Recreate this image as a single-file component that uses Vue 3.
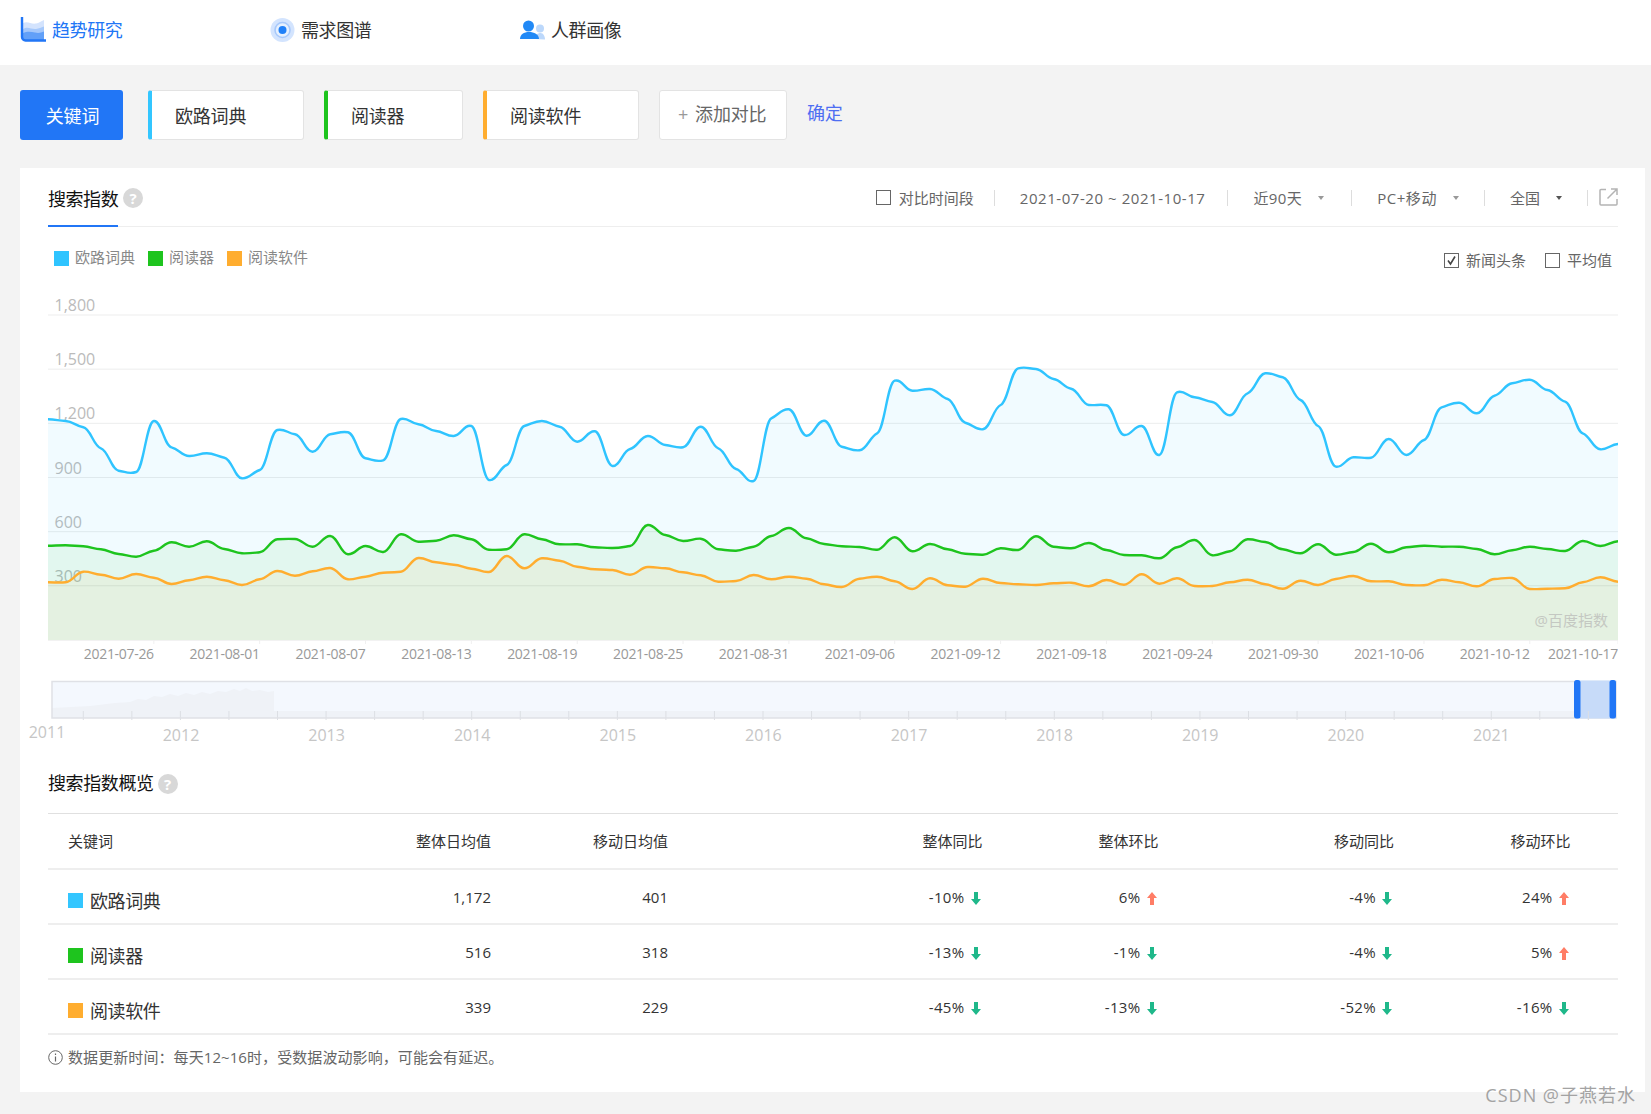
<script setup>
const seg = (base, arr) => arr.map((v) => base + v / 3)

const blueRaw = [
  ...seg(290, [388,393,412,475,542,546,393,472,498,490,503,565,540,420,433,485,433,427,505,511,387,403,423,438,408,570,525,408,393]),
  ...seg(340, [260,305,274,378,327,288,315,322,260,325,387,423,235,208,287,242,320,331,280,122,152,147,177,248,268,195,85,87,117,146,195]),
  ...seg(340, [196,285,258,345,157,172,186,226,160,100,112,180,258,380,352,353,297,345,300,202,188,220,167,130,119,150,185,280,328,312]),
]
const greenRaw = [
  ...seg(290, [767,766,769,778,792,800,782,757,770,754,777,790,787,748,747,770,738,793,768,786,733,755,752,736,748,779,778,733,748]),
  ...seg(340, [613,613,622,624,618,555,585,603,596,628,632,620,588,564,595,612,619,621,629,592,634,612,628,641,644,625,630,589,620,625,609]),
  ...seg(340, [630,645,646,655,622,600,646,634,598,606,628,640,613,644,636,611,637,622,617,620,620,627,643,631,620,627,633,603,618,604]),
]
const orangeRaw = [
  ...seg(290, [877,877,845,854,866,852,863,882,871,860,871,885,868,843,857,844,834,868,860,848,845,804,817,824,836,846,798,835,805]),
  ...seg(340, [662,680,688,690,704,681,685,697,706,725,723,705,718,710,716,733,741,716,710,724,747,715,736,740,716,729,733,735,730,728,739]),
  ...seg(340, [720,734,703,731,715,738,738,727,719,733,746,722,735,717,708,724,724,735,736,719,727,739,717,714,747,746,745,727,712,725]),
]

const X0 = 48
const STEP = 1570 / 89
const BOTTOM = 640
const DAMP = 0.3
const xAt = (i) => X0 + STEP * i

function smooth(ys) {
  const pts = ys.map((y, i) => [xAt(i), y])
  let d = `M${pts[0][0].toFixed(1)} ${pts[0][1].toFixed(1)}`
  for (let i = 0; i < pts.length - 1; i++) {
    const p0 = pts[Math.max(0, i - 1)]
    const p1 = pts[i]
    const p2 = pts[i + 1]
    const p3 = pts[Math.min(pts.length - 1, i + 2)]
    const c1x = p1[0] + STEP * 0.42
    const c1y = p1[1] + ((p2[1] - p0[1]) / 6) * DAMP
    const c2x = p2[0] - STEP * 0.42
    const c2y = p2[1] - ((p3[1] - p1[1]) / 6) * DAMP
    d += `C${c1x.toFixed(1)} ${c1y.toFixed(1)} ${c2x.toFixed(1)} ${c2y.toFixed(1)} ${p2[0].toFixed(1)} ${p2[1].toFixed(1)}`
  }
  return d
}

const series = [
  { name: '欧路词典', color: '#2fc4ff', area: 'rgba(51,198,255,.07)', ys: blueRaw },
  { name: '阅读器', color: '#1ec41e', area: 'rgba(30,196,30,.07)', ys: greenRaw },
  { name: '阅读软件', color: '#ffad2f', area: 'rgba(255,173,47,.075)', ys: orangeRaw },
].map((s) => {
  const line = smooth(s.ys)
  return { ...s, line, fill: `${line}L${xAt(89)} ${BOTTOM}L${X0} ${BOTTOM}Z` }
})

const grid = [
  { label: '1,800', y: 315 },
  { label: '1,500', y: 369.2 },
  { label: '1,200', y: 423.3 },
  { label: '900', y: 477.5 },
  { label: '600', y: 531.7 },
  { label: '300', y: 585.8 },
]

const dates = ['07-26','08-01','08-07','08-13','08-19','08-25','08-31','09-06','09-12','09-18','09-24','09-30','10-06','10-12']
const xLabels = [
  ...dates.map((d, k) => ({ text: `2021-${d}`, x: xAt(6 * (k + 1)) })),
  { text: '2021-10-17', x: xAt(89) },
]

const brushTicks = Array.from({ length: 32 }, (_, k) => 83.3 + 48.55 * k)
const years = Array.from({ length: 10 }, (_, k) => ({ text: String(2012 + k), x: 181 + 145.6 * k }))

const chips = [
  { name: '欧路词典', color: '#33c6ff', width: 156 },
  { name: '阅读器', color: '#1ec41e', width: 139 },
  { name: '阅读软件', color: '#ffad2f', width: 156 },
]

const heads = ['关键词', '整体日均值', '移动日均值', '整体同比', '整体环比', '移动同比', '移动环比']
const rows = [
  { name: '欧路词典', color: '#33c6ff', a: '1,172', b: '401', v: [['-10%', 0], ['6%', 1], ['-4%', 0], ['24%', 1]] },
  { name: '阅读器', color: '#1ec41e', a: '516', b: '318', v: [['-13%', 0], ['-1%', 0], ['-4%', 0], ['5%', 1]] },
  { name: '阅读软件', color: '#ffad2f', a: '339', b: '229', v: [['-45%', 0], ['-13%', 0], ['-52%', 0], ['-16%', 0]] },
]
</script>

<template>
  <div class="page">
    <nav class="nav">
      <div class="nav-item active">
        <svg class="nav-icon" width="26" height="26" viewBox="0 0 26 26">
          <path d="M3 6c5-2.500 8 1.500 13 .5 3-.6 5-2 8-3.500V20H3Z" fill="#d3e3fd" />
          <path d="M3 12c5-3 8 .5 13 0 3-.3 5-1.500 8-2.500V21H3Z" fill="#a5c8fb" />
          <path d="M3 16c4-2 8-1.500 12-.5 4 1 6 0 9-1V23H3Z" fill="#62a0f8" />
          <path d="M2 0V20a3.500 3.500 0 0 0 3.500 3.500H26" fill="none" stroke="#2176f6" stroke-width="2.400" />
        </svg>
        <span>趋势研究</span>
      </div>
      <div class="nav-item">
        <svg class="nav-icon" width="25" height="26" viewBox="0 0 25 26">
          <circle cx="12.500" cy="13" r="12" fill="#d3e4fe" />
          <circle cx="12.500" cy="13" r="7.500" fill="#e6f0fe" stroke="#a8c9fb" stroke-width="1.600" />
          <circle cx="12.500" cy="13" r="4" fill="#2080f8" />
        </svg>
        <span>需求图谱</span>
      </div>
      <div class="nav-item">
        <svg class="nav-icon" width="25" height="26" viewBox="0 0 25 26">
          <circle cx="20" cy="11.500" r="4" fill="#bcd8fb" />
          <path d="M15 22c0-4 2.500-6 5.500-6s4.500 3.500 4.500 6.500Z" fill="#bcd8fb" />
          <circle cx="8.500" cy="9" r="5.500" fill="#2189f6" />
          <path d="M0 22c0-4.500 4-7 9-7s10 2.500 10 7Z" fill="#2189f6" />
        </svg>
        <span>人群画像</span>
      </div>
    </nav>

    <section class="actions">
      <button class="key-btn">关键词</button>
      <div
        v-for="c in chips"
        :key="c.name"
        class="chip"
        :style="{ width: c.width + 'px', borderLeftColor: c.color }"
      >{{ c.name }}</div>
      <div class="add"><span class="plus">+</span>添加对比</div>
      <a class="confirm">确定</a>
    </section>

    <main class="card">
      <header class="head">
        <div class="tab">搜索指数</div>
        <span class="help">?</span>
        <div class="filters">
          <span class="box"></span>
          <span class="f f-compare">对比时间段</span>
          <i class="sep"></i>
          <span class="f f-date">2021-07-20 ~ 2021-10-17</span>
          <i class="sep"></i>
          <span class="f f-sel f-days">近90天<i class="tri"></i></span>
          <i class="sep"></i>
          <span class="f f-sel f-wide">PC+移动<i class="tri"></i></span>
          <i class="sep"></i>
          <span class="f f-sel">全国<i class="tri dark"></i></span>
          <i class="sep"></i>
          <svg class="share" width="19" height="18" viewBox="0 0 19 18" fill="none" stroke="#b4b4b4" stroke-width="1.500">
            <path d="M7 1.500H2a1 1 0 0 0-1 1V16a1 1 0 0 0 1 1h15a1 1 0 0 0 1-1V11" />
            <path d="M8.500 10.500 17.500 1.500M12 1H18V7" />
          </svg>
        </div>
      </header>

      <div class="options">
        <div class="legend">
          <span v-for="s in series" :key="s.name" class="legend-item">
            <i class="swatch" :style="{ background: s.color }"></i>{{ s.name }}
          </span>
        </div>
        <div class="checks">
          <span class="box on">
            <svg width="11" height="11" viewBox="0 0 11 11"><path d="M2 5.500 4.500 9 9 1.500" fill="none" stroke="#444" stroke-width="1.600" /></svg>
          </span>
          <span class="f check-text">新闻头条</span>
          <span class="box second"></span>
          <span class="f check-text">平均值</span>
        </div>
      </div>

      <svg class="chart" width="1570" height="386" viewBox="48 286 1570 386">
        <line v-for="g in grid" :key="g.y" x1="48" x2="1618" :y1="g.y" :y2="g.y" stroke="#f3f3f3" />
        <text v-for="g in grid" :key="g.label" x="54.500" :y="g.y - 4" class="y-label">{{ g.label }}</text>
        <path v-for="s in series" :key="s.name + 'a'" :d="s.fill" :fill="s.area" />
        <line v-for="g in grid" :key="g.y + 'o'" x1="48" x2="1618" :y1="g.y" :y2="g.y" stroke="rgba(120,130,130,.05)" />
        <path v-for="s in series" :key="s.name + 'l'" :d="s.line" fill="none" :stroke="s.color" stroke-width="2.400" stroke-linejoin="round" />
        <line x1="48" x2="1618" y1="640.500" y2="640.500" stroke="#f2f2f2" />
        <line v-for="l in xLabels" :key="l.text + 't'" :x1="l.x" :x2="l.x" y1="640" y2="644" stroke="#f0f0f0" />
        <text v-for="l in xLabels" :key="l.text" :x="l.x" y="659" text-anchor="end" class="x-label">{{ l.text }}</text>
        <text x="1608" y="625.500" text-anchor="end" class="mark">@百度指数</text>
      </svg>

      <svg class="brush" width="1600" height="78" viewBox="28 672 1600 78">
        <rect x="52" y="681.500" width="1564" height="36" fill="#f4f8fe" />
        <rect x="52" y="711" width="1564" height="7" fill="#eff2f7" />
        <path d="M52 708 90 706 115 703 130 702 138 699 146 700 154 696 162 697 170 694 178 696 186 693 194 695 202 692 210 694 218 691 226 692 234 689 240 691 246 688 252 691 260 690 268 692 274 691V711H52Z" fill="#eff2f7" />
        <line v-for="t in brushTicks" :key="t" :x1="t" :x2="t" y1="711" y2="720" stroke="#dcdfe4" />
        <rect x="52" y="681.500" width="1564" height="36.500" fill="none" stroke="#dfe1e6" stroke-width="1.500" />
        <rect x="1575" y="680.500" width="41" height="38" fill="#c7dbf9" />
        <line x1="1588.400" x2="1588.400" y1="711" y2="720" stroke="#dcdfe4" />
        <rect x="1574" y="680" width="6.500" height="38.500" rx="2.500" fill="#2176f6" />
        <rect x="1609.500" y="680" width="6.500" height="38.500" rx="2.500" fill="#2176f6" />
        <text x="47" y="738" text-anchor="middle" class="year">2011</text>
        <text v-for="y in years" :key="y.text" :x="y.x" y="741" text-anchor="middle" class="year">{{ y.text }}</text>
      </svg>

      <div class="overview">
        <span class="over-title">搜索指数概览</span>
        <span class="help">?</span>
      </div>

      <div class="table">
        <div class="row head-row">
          <div v-for="(h, i) in heads" :key="h" class="cell" :class="{ left: i === 0 }">{{ h }}</div>
        </div>
        <div v-for="r in rows" :key="r.name" class="row">
          <div class="cell left name"><i class="swatch" :style="{ background: r.color }"></i>{{ r.name }}</div>
          <div class="cell num">{{ r.a }}</div>
          <div class="cell num">{{ r.b }}</div>
          <div v-for="(v, i) in r.v" :key="i" class="cell num pct">
            <span class="pct-text">{{ v[0] }}</span>
            <svg class="arrow" width="10" height="13" viewBox="0 0 10 13">
              <path v-if="v[1]" d="M5 0 10 6H7V13H3V6H0Z" fill="#ff7d66" />
              <path v-else d="M5 13 0 7H3V0H7V7H10Z" fill="#1fb88a" />
            </svg>
          </div>
        </div>
      </div>

      <footer class="note">
        <svg class="info" width="15" height="15" viewBox="0 0 15 15" fill="none" stroke="#666">
          <circle cx="7.500" cy="7.500" r="6.800" />
          <path d="M7.500 6.500V11.500M7.500 3.500V5" stroke-width="1.200" />
        </svg>
        <span class="note-text">数据更新时间：每天12~16时，受数据波动影响，可能会有延迟。</span>
      </footer>
    </main>

    <div class="watermark">CSDN @子燕若水</div>
  </div>
</template>

<style>
html, body { margin: 0; background: #f3f3f3; }
</style>

<style scoped>
.page {
  position: relative;
  width: 1651px;
  height: 1114px;
  overflow: hidden;
  background: #f3f3f3;
  color: #333;
  font-family: "Open Sans", "Noto Sans CJK SC", sans-serif;
}
i { font-style: normal; }
.nav {
  display: flex;
  height: 65px;
  padding-left: 20px;
  background: #fff;
  box-sizing: border-box;
}
.nav-item {
  display: flex;
  align-items: center;
  width: 250px;
  gap: 6px;
  line-height: 24px;
  margin-top: -6px;
  color: #333;
}
.nav-item span { font-size: 18px; letter-spacing: -.4px; }
.nav-item.active { color: #2176f6; }
.nav-icon { flex: none; }

.actions {
  display: flex;
  align-items: center;
  height: 50px;
  margin: 25px 0 28px 20px;
  font-size: 18px;
  letter-spacing: -.2px;
}
.key-btn {
  width: 103px;
  height: 50px;
  margin-right: 25px;
  padding: 0 0 0 2px;
  border: 0;
  border-radius: 3px;
  background: #2176f6;
  color: #fff;
  font: inherit;
  letter-spacing: -.2px;
}
.chip {
  box-sizing: border-box;
  height: 50px;
  margin-right: 20px;
  padding-left: 23px;
  background: #fff;
  border: 1px solid #e3e3e3;
  border-left: 4px solid;
  border-radius: 3px;
  line-height: 50px;
  color: #333;
}
.add {
  box-sizing: border-box;
  width: 128px;
  height: 50px;
  margin-right: 20px;
  padding-left: 18px;
  background: #fff;
  border: 1px solid #e3e3e3;
  border-radius: 3px;
  line-height: 46px;
  color: #666;
}
.plus { margin-right: 7px; color: #999; }
.confirm { color: #4e6ef2; margin-top: -7px; }

.card {
  box-sizing: border-box;
  width: 1625px;
  height: 924px;
  margin-left: 20px;
  padding: 0 27px 0 28px;
  background: #fff;
}
.head {
  display: flex;
  align-items: center;
  height: 59px;
  box-sizing: border-box;
  border-bottom: 1px solid #eee;
}
.tab {
  box-sizing: border-box;
  flex: none;
  width: 70px;
  height: 58px;
  padding-top: 18px;
  margin-bottom: -1px;
  border-bottom: 2px solid #2176f6;
  font-size: 18px;
  line-height: 24px;
  letter-spacing: -.45px;
  white-space: nowrap;
  color: #111;
}
.help {
  display: inline-block;
  width: 20px;
  height: 20px;
  margin-left: 5px;
  border-radius: 50%;
  background: #d8d8d8;
  color: #fff;
  font-size: 15px;
  font-weight: 700;
  line-height: 20px;
  text-align: center;
}
.head .help { margin-top: 1px; }
.filters {
  display: flex;
  align-items: center;
  margin-left: auto;
  margin-top: 1px;
  color: #666;
}
.f { font-size: 15px; line-height: 20px; color: #666; white-space: nowrap; }
.box {
  box-sizing: border-box;
  display: inline-flex;
  align-items: center;
  justify-content: center;
  flex: none;
  width: 15px;
  height: 15px;
  border: 1px solid #666;
}
.f-compare { margin: 0 -5px 0 8px; }
.sep {
  display: block;
  flex: none;
  width: 1px;
  height: 16px;
  margin: 0 25px;
  background: #ddd;
}
.f-date { margin-right: -3px; letter-spacing: .55px; }
.f-sel { display: inline-flex; align-items: center; }
.f-days { letter-spacing: .4px; margin-right: 2px; }
.f-wide { letter-spacing: .55px; }
.tri {
  width: 0;
  height: 0;
  margin-left: 16px;
  border: 3px solid transparent;
  border-top: 4px solid #999;
  border-bottom: 0;
}
.tri.dark { border-top-color: #555; }
.share { margin: -2px 0 0 -14px; }

.options {
  display: flex;
  justify-content: space-between;
  align-items: flex-start;
  height: 59px;
  padding: 0 6px;
}
.legend {
  display: flex;
  margin-top: 20px;
  font-size: 15px;
  line-height: 20px;
  color: #888;
}
.legend-item { display: inline-flex; align-items: center; margin-right: 13px; }
.swatch {
  flex: none;
  display: inline-block;
  width: 15px;
  height: 15px;
  margin-right: 6px;
}
.legend .swatch { margin-top: 2px; }
.checks {
  display: flex;
  align-items: center;
  margin-top: 23px;
}
.check-text { margin-left: 7px; }
.box.second { margin-left: 19px; }

.chart { display: block; }
.y-label { font-size: 16px; fill: #bbb; }
.x-label { font-size: 14px; fill: #999; letter-spacing: -.3px; }
.mark { font-size: 15px; fill: #c4c8c2; }

.brush { display: block; margin-left: -20px; }
.year { font-size: 16px; fill: #c6c6c6; }

.overview {
  display: flex;
  align-items: center;
  box-sizing: border-box;
  height: 64px;
  padding-top: 3px;
  border-bottom: 1px solid #e0e0e0;
}
.over-title { font-size: 18px; line-height: 24px; letter-spacing: -.4px; color: #111; }
.overview .help { margin-left: 4px; margin-top: 2px; }

.row {
  box-sizing: border-box;
  display: grid;
  grid-template-columns: 243px 200px 177px 314.5px 176px 235.5px 176.6px;
  height: 55px;
  padding-right: 47px;
  border-bottom: 2px solid #eee;
  align-items: center;
  font-size: 15px;
  line-height: 20px;
  color: #333;
}
.head-row { height: 56px; }
.cell { text-align: right; white-space: nowrap; }
.cell.left { text-align: left; padding-left: 20px; }
.name {
  display: flex;
  align-items: center;
  font-size: 18px;
  letter-spacing: -.4px;
  padding-top: 8px;
}
.name .swatch { margin-right: 7px; }
.pct {
  display: flex;
  justify-content: flex-end;
  align-items: center;
  gap: 6px;
  padding-right: 2px;
}
.pct-text { letter-spacing: .35px; }
.arrow { margin-top: 3px; }
.note {
  display: flex;
  align-items: center;
  gap: 5px;
  margin-top: 12px;
  font-size: 15px;
  line-height: 20px;
  color: #666;
}
.note-text { letter-spacing: .08px; }
.info { flex: none; }

.watermark {
  position: absolute;
  right: 15px;
  bottom: 7px;
  font-size: 18px;
  line-height: 24px;
  letter-spacing: 1px;
  color: #a3a3a3;
}
</style>
